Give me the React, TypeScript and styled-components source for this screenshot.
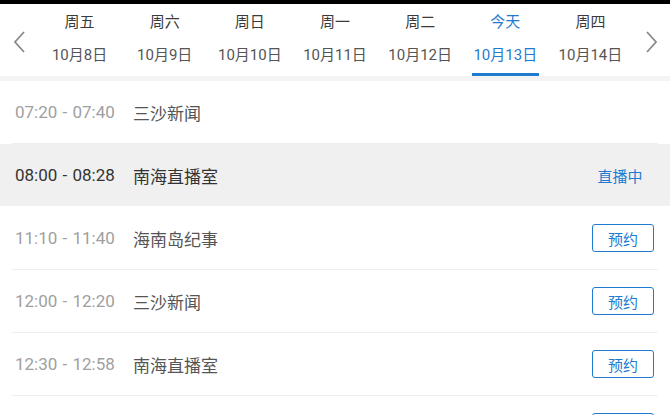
import React from "react";
import styled, { createGlobalStyle } from "styled-components";

const GlobalStyle = createGlobalStyle`
  html, body {
    margin: 0;
    padding: 0;
    background: #ffffff;
    font-family: Roboto, "Noto Sans CJK SC", sans-serif;
  }
`;

const BLUE = "#1f7bcf";

const Page = styled.div`
  width: 670px;
  height: 415px;
  overflow: hidden;
  background: #fff;
`;

const StatusStrip = styled.div`
  height: 4px;
  background: #000;
`;

const DateBar = styled.div`
  display: flex;
  align-items: stretch;
  height: 72px;
  background: #fff;
  border-bottom: 5px solid #f4f4f4;
`;

const Arrow = styled.div`
  width: 37px;
  display: flex;
  align-items: center;
  justify-content: center;
  padding-top: 4px;
`;

const Days = styled.div`
  flex: 1;
  display: grid;
  grid-template-columns: repeat(7, 1fr);
`;

const Day = styled.div<{ $active?: boolean }>`
  position: relative;
  display: flex;
  flex-direction: column;
  align-items: center;
  padding-top: 6px;
  color: ${(p) => (p.$active ? BLUE : "#3a3a3a")};

  &::after {
    content: "";
    display: ${(p) => (p.$active ? "block" : "none")};
    position: absolute;
    left: 9px;
    right: 9px;
    bottom: 0;
    height: 3px;
    background: ${BLUE};
  }
`;

const Weekday = styled.span`
  font-size: 15px;
  line-height: 24px;
`;

const DateText = styled.span<{ $active?: boolean }>`
  margin-top: 10px;
  font-size: 15px;
  line-height: 22px;
  color: ${(p) => (p.$active ? BLUE : "#555")};
`;

const List = styled.div`
  display: flex;
  flex-direction: column;
`;

const Row = styled.div<{ $live?: boolean }>`
  display: flex;
  align-items: center;
  height: 62px;
  padding: 0 16px 0 15px;
  background: ${(p) => (p.$live ? "#f0f0f0" : "#fff")};
  position: relative;

  &::after {
    content: "";
    position: absolute;
    left: 12px;
    right: 12px;
    bottom: -1px;
    height: 1px;
    background: ${(p) => (p.$live ? "transparent" : "#efefef")};
  }
`;

const Divider = styled.div`
  height: 1px;
`;

const Time = styled.span<{ $live?: boolean }>`
  width: 118px;
  font-size: 17px;
  word-spacing: 1px;
  color: ${(p) => (p.$live ? "#333" : "#a0a0a0")};
`;

const Title = styled.span<{ $live?: boolean }>`
  flex: 1;
  font-size: 17px;
  color: ${(p) => (p.$live ? "#333" : "#555")};
`;

const Action = styled.div`
  width: 62px;
  display: flex;
  justify-content: center;
`;

const LiveTag = styled.span`
  font-size: 15px;
  color: ${BLUE};
  padding-right: 6px;
`;

const BookButton = styled.button`
  width: 62px;
  height: 28px;
  padding: 0;
  border: 1.5px solid ${BLUE};
  border-radius: 3px;
  background: #fff;
  color: ${BLUE};
  font-family: inherit;
  font-size: 15px;
`;

const Chevron = ({ dir }: { dir: "left" | "right" }) => (
  <svg width="14" height="24" viewBox="0 0 14 24">
    <path
      d={dir === "left" ? "M12 2 L3 12 L12 22" : "M2 2 L11 12 L2 22"}
      fill="none"
      stroke="#8a8a8a"
      strokeWidth="1.8"
    />
  </svg>
);

const days = [
  { w: "周五", d: "10月8日" },
  { w: "周六", d: "10月9日" },
  { w: "周日", d: "10月10日" },
  { w: "周一", d: "10月11日" },
  { w: "周二", d: "10月12日" },
  { w: "今天", d: "10月13日", active: true },
  { w: "周四", d: "10月14日" },
];

type Show = { time: string; title: string; state: "past" | "live" | "book" };

const shows: Show[] = [
  { time: "07:20 - 07:40", title: "三沙新闻", state: "past" },
  { time: "08:00 - 08:28", title: "南海直播室", state: "live" },
  { time: "11:10 - 11:40", title: "海南岛纪事", state: "book" },
  { time: "12:00 - 12:20", title: "三沙新闻", state: "book" },
  { time: "12:30 - 12:58", title: "南海直播室", state: "book" },
  { time: "13:00 - 13:20", title: "三沙新闻", state: "book" },
];

const App = () => {
  return (
    <Page>
      <GlobalStyle />
      <StatusStrip />
      <DateBar>
        <Arrow>
          <Chevron dir="left" />
        </Arrow>
        <Days>
          {days.map((day) => (
            <Day key={day.d} $active={day.active}>
              <Weekday>{day.w}</Weekday>
              <DateText $active={day.active}>{day.d}</DateText>
            </Day>
          ))}
        </Days>
        <Arrow>
          <Chevron dir="right" />
        </Arrow>
      </DateBar>
      <List>
        {shows.map((show, i) => {
          const live = show.state === "live";
          return (
            <React.Fragment key={i}>
              <Row $live={live}>
                <Time $live={live}>{show.time}</Time>
                <Title $live={live}>{show.title}</Title>
                <Action>
                  {live && <LiveTag>直播中</LiveTag>}
                  {show.state === "book" && <BookButton>预约</BookButton>}
                </Action>
              </Row>
              <Divider />
            </React.Fragment>
          );
        })}
      </List>
    </Page>
  );
};

export default App;
